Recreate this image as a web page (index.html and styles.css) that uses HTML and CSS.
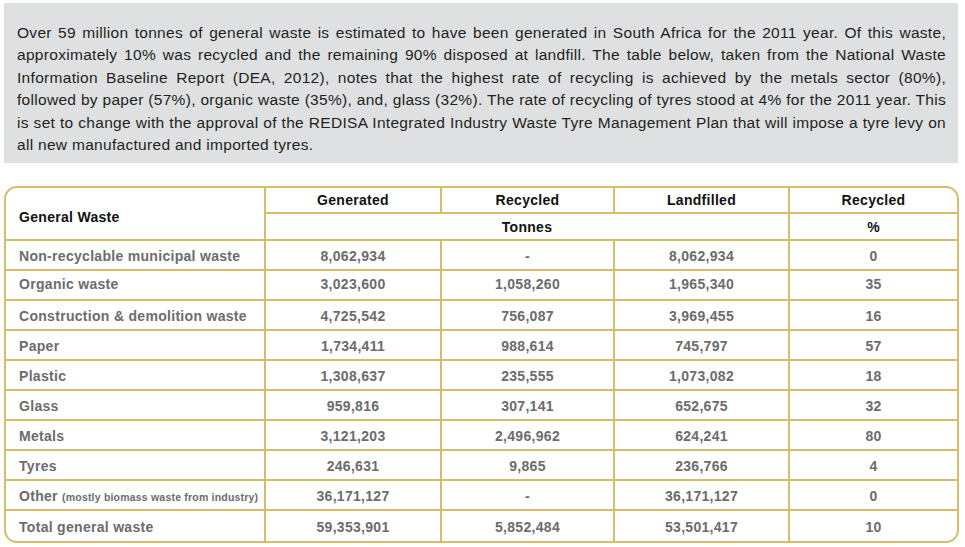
FILE: index.html
```html
<!DOCTYPE html>
<html lang="en">
<head>
<meta charset="utf-8">
<title>General Waste</title>
<link rel="stylesheet" href="styles.css">
</head>
<body>
<div class="intro">
<p>
<span class="line">Over 59 million tonnes of general waste is estimated to have been generated in South Africa for the 2011 year. Of this waste,</span>
<span class="line">approximately 10% was recycled and the remaining 90% disposed at landfill. The table below, taken from the National Waste</span>
<span class="line">Information Baseline Report (DEA, 2012), notes that the highest rate of recycling is achieved by the metals sector (80%),</span>
<span class="line">followed by paper (57%), organic waste (35%), and, glass (32%). The rate of recycling of tyres stood at 4% for the 2011 year. This</span>
<span class="line">is set to change with the approval of the REDISA Integrated Industry Waste Tyre Management Plan that will impose a tyre levy on</span>
<span class="line end">all new manufactured and imported tyres.</span>
</p>
</div>
<div class="table-wrap">
<table class="waste">
<thead>
<tr class="h1">
<th rowspan="2" class="name c1 head-name">General Waste</th>
<th class="c2">Generated</th>
<th class="c3">Recycled</th>
<th class="c4">Landfilled</th>
<th class="c5 last">Recycled</th>
</tr>
<tr class="h2">
<th colspan="3">Tonnes</th>
<th class="last">%</th>
</tr>
</thead>
<tbody>
<tr><td class="name">Non-recyclable municipal waste</td><td>8,062,934</td><td>-</td><td>8,062,934</td><td class="last">0</td></tr>
<tr class="raised"><td class="name">Organic waste</td><td>3,023,600</td><td>1,058,260</td><td>1,965,340</td><td class="last">35</td></tr>
<tr><td class="name">Construction &amp; demolition waste</td><td>4,725,542</td><td>756,087</td><td>3,969,455</td><td class="last">16</td></tr>
<tr><td class="name">Paper</td><td>1,734,411</td><td>988,614</td><td>745,797</td><td class="last">57</td></tr>
<tr><td class="name">Plastic</td><td>1,308,637</td><td>235,555</td><td>1,073,082</td><td class="last">18</td></tr>
<tr><td class="name">Glass</td><td>959,816</td><td>307,141</td><td>652,675</td><td class="last">32</td></tr>
<tr><td class="name">Metals</td><td>3,121,203</td><td>2,496,962</td><td>624,241</td><td class="last">80</td></tr>
<tr><td class="name">Tyres</td><td>246,631</td><td>9,865</td><td>236,766</td><td class="last">4</td></tr>
<tr><td class="name">Other <span class="note">(mostly biomass waste from industry)</span></td><td>36,171,127</td><td>-</td><td>36,171,127</td><td class="last">0</td></tr>
<tr class="total"><td class="name">Total general waste</td><td>59,353,901</td><td>5,852,484</td><td>53,501,417</td><td class="last">10</td></tr>
</tbody>
</table>
</div>
</body>
</html>
```
FILE: styles.css
```css
html, body {
  margin: 0;
  padding: 0;
  background: #ffffff;
}

body {
  font-family: "Liberation Sans", Arial, sans-serif;
}

.intro {
  margin: 3px 7px 0 4px;
  background: #dfe0e2;
  padding: 19px 12px 6px 13px;
  height: 160px;
  box-sizing: border-box;
}

.intro p {
  margin: 0;
  font-size: 15.5px;
  letter-spacing: 0.3px;
  line-height: 22.4px;
  color: #231f20;
}

.intro .line {
  display: block;
  text-align: justify;
  text-align-last: justify;
}

.intro .line.end {
  text-align-last: left;
}

.table-wrap {
  margin: 23px 6px 0 4px;
  border: 2px solid #d5bd6b;
  border-radius: 13px;
  overflow: hidden;
}

.waste {
  width: 100%;
  border-collapse: separate;
  border-spacing: 0;
  table-layout: fixed;
  font-size: 14px;
  letter-spacing: 0.3px;
  font-weight: bold;
}

.waste th,
.waste td {
  box-sizing: border-box;
  padding: 0 6px;
  text-align: center;
  vertical-align: middle;
  border-right: 2px solid #d5bd6b;
  border-bottom: 2px solid #d5bd6b;
}

.waste th {
  color: #111111;
  height: 26px;
}

.waste .h2 th {
  height: 27px;
}

.waste .head-name {
  padding-top: 6px;
}

.waste td {
  color: #6b6c6e;
  height: 30px;
  padding-top: 1px;
}

.waste .raised td {
  padding-top: 0;
  padding-bottom: 3px;
}

.waste .c1 { width: 260px; }
.waste .c2 { width: 176px; }
.waste .c3 { width: 173px; }
.waste .c4 { width: 175px; }
.waste .c5 { width: 167px; }

.waste .name {
  text-align: left;
  padding-left: 13px;
  padding-right: 2px;
  white-space: nowrap;
}

.waste .last {
  border-right: none;
}

.waste .total td {
  border-bottom: none;
}

.note {
  font-size: 10.5px;
  letter-spacing: 0.2px;
}
```
